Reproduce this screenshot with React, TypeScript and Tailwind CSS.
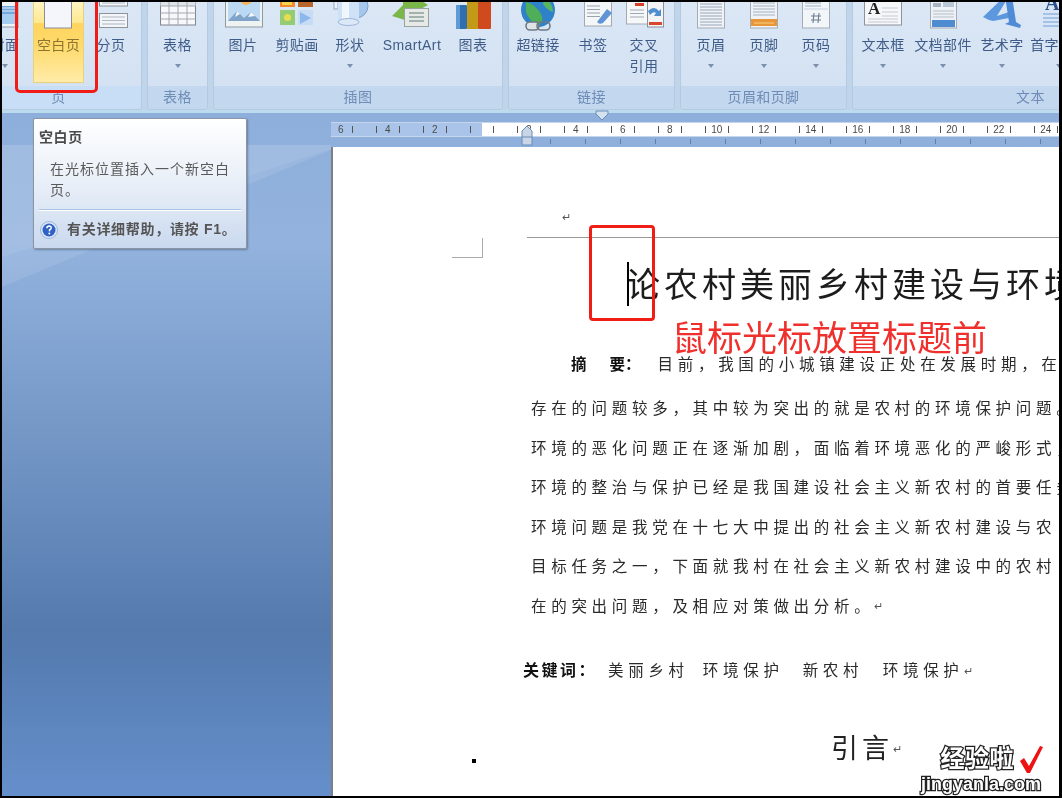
import type { ReactNode } from "react";

const rulerLabels = ["6", "4", "2", "", "2", "4", "6", "8", "10", "12", "14", "16", "18", "20", "22", "24"];

function Svg({ children }: { children: ReactNode }) {
  return (
    <svg width="42" height="34" viewBox="0 0 42 34" className="shrink-0">
      {children}
    </svg>
  );
}

function PageLines({ x, y, w, n, gap = 3, color = "#a9b6c8" }: { x: number; y: number; w: number; n: number; gap?: number; color?: string }) {
  return (
    <>
      {Array.from({ length: n }).map((_, i) => (
        <line key={i} x1={x} x2={x + w} y1={y + i * gap} y2={y + i * gap} stroke={color} strokeWidth="1.2" />
      ))}
    </>
  );
}

const CoverIcon = (
  <Svg>
    <rect x="7" y="-4" width="28" height="29" fill="#eef3f8" stroke="#8f98a3" />
    <rect x="9" y="4" width="24" height="8" fill="#6fa9e0" />
    <PageLines x={9} y={6} w={24} n={2} color="#e9eef4" />
    <rect x="9" y="12" width="24" height="10" fill="#a4cdf0" />
  </Svg>
);
const BlankIcon = (
  <Svg>
    <rect x="6.5" y="-5" width="27" height="31" fill="#f4f6fb" stroke="#8b8f94" />
  </Svg>
);
const BreakIcon = (
  <Svg>
    <rect x="9.5" y="-6" width="28" height="10" fill="#f3f5f8" stroke="#8d949c" />
    <line x1="12" x2="35" y1="1" y2="1" stroke="#aeb7c2" />
    <rect x="9.5" y="11.5" width="28" height="14" fill="#f3f5f8" stroke="#8d949c" />
    <PageLines x={12} y={15} w={23} n={3} gap={3.5} color="#aeb7c2" />
  </Svg>
);
const TableIcon = (
  <Svg>
    <rect x="3.5" y="-5" width="35" height="28" fill="#f7f8fa" stroke="#7f8690" />
    <rect x="3.5" y="-5" width="35" height="9" fill="#dfe3e8" />
    {[12, 21, 30].map((x) => (
      <line key={x} x1={x} x2={x} y1="-5" y2="23" stroke="#a3a9b2" />
    ))}
    {[4, 11, 17].map((y) => (
      <line key={y} x1="3.5" x2="38.5" y1={y} y2={y} stroke="#a3a9b2" />
    ))}
  </Svg>
);
const PictureIcon = (
  <Svg>
    <rect x="3.5" y="-5" width="37" height="30" fill="#eef3f2" stroke="#8e9aa0" />
    <rect x="6" y="-5" width="32" height="24" fill="#bcd9f4" />
    <circle cx="24" cy="-3" r="6" fill="#f7b35a" />
    <path d="M6 19 L15 9 L22 16 L29 10 L38 19 Z" fill="#7fa3c9" />
    <path d="M15 9 L18 12 L13 15 Z" fill="#f2f6fa" />
    <path d="M29 10 L33 14 L26 15 Z" fill="#f2f6fa" />
  </Svg>
);
const ClipArtIcon = (
  <Svg>
    <rect x="4" y="-2" width="15" height="7" fill="#f08a2c" />
    <rect x="6" y="0" width="10" height="3" fill="#f8d24d" />
    <rect x="22" y="-2" width="15" height="7" fill="#b9652c" />
    <rect x="4" y="8" width="15" height="15" fill="#93cc72" />
    <circle cx="11.5" cy="15.5" r="3.5" fill="#e6dd52" />
    <rect x="22" y="8" width="15" height="15" fill="#c6dcf5" />
    <path d="M24 10 L35 16 L24 22 Z" fill="#8db8ec" />
  </Svg>
);
const ShapeIcon = (
  <Svg>
    <circle cx="27" cy="4" r="12" fill="#a7c6ec" stroke="#7f9fc9" />
    <rect x="5" y="-4" width="4" height="11" fill="#eef3f9" stroke="#94a6bf" />
    <rect x="9" y="-4" width="21" height="24" fill="#cfe1f6" />
    <rect x="13" y="-4" width="7" height="24" fill="#f1f6fc" />
    <ellipse cx="19.5" cy="20" rx="10.5" ry="3.5" fill="#dbe8f8" stroke="#9db5d6" />
  </Svg>
);
const SmartArtIcon = (
  <Svg>
    <path d="M1 14 L12 3 L12 -2 L26 -2 L24 -6 L37 3 L28 8 L14 8 L14 18 Z" fill="#7ab648" />
    <rect x="13.5" y="6.5" width="24" height="18" fill="#e6e9e6" stroke="#9aa39b" />
    <PageLines x={18} y={11} w={15} n={3} gap={4} color="#5f7f78" />
  </Svg>
);
const ChartIcon = (
  <Svg>
    <rect x="4" y="3" width="11" height="24" rx="1" fill="#2f6fb0" />
    <rect x="4" y="3" width="4" height="24" fill="#5e9bd6" />
    <rect x="15" y="-4" width="11" height="31" fill="#c39a18" />
    <rect x="26" y="-4" width="13" height="31" rx="1" fill="#cf4a1c" />
  </Svg>
);
const LinkIcon = (
  <Svg>
    <circle cx="21" cy="8" r="17" fill="#2f82c8" />
    <path d="M9 0 Q18 2 24 12 Q28 20 20 24 Q12 18 9 10 Z" fill="#4fae58" />
    <path d="M28 -6 Q36 2 36 10 Q30 8 26 2 Z" fill="#58b660" />
    <rect x="9" y="20" width="13" height="8" rx="4" fill="#dfe4e8" stroke="#6f7a84" strokeWidth="1.6" />
    <rect x="20" y="20" width="13" height="8" rx="4" fill="none" stroke="#6f7a84" strokeWidth="1.6" />
  </Svg>
);
const BookmarkIcon = (
  <Svg>
    <rect x="12.5" y="-6" width="27" height="30" fill="#f4f6f8" stroke="#a2a9b1" />
    <PageLines x={15} y={4} w={13} n={4} gap={3.5} color="#98a3b0" />
    <path d="M25 20 L35 7 L40 11 L31 21 Q27 23 25 20 Z" fill="#5f95d4" />
  </Svg>
);
const CrossRefIcon = (
  <Svg>
    <rect x="3.5" y="-6" width="25" height="28" fill="#f6f7f9" stroke="#a5abb3" />
    <rect x="12" y="1" width="9" height="3" fill="#d9402a" />
    <PageLines x={7} y={8} w={14} n={3} gap={3.5} color="#a0aab6" />
    <rect x="24.5" y="-6" width="16" height="31" fill="#f3f4f6" stroke="#8a9098" />
    <rect x="26" y="20" width="13" height="3" fill="#d9482c" />
    <path d="M25 9 Q31 3 36 9 L38 7 L38 14 L31 14 L33 11 Q30 9 27 13 Z" fill="#4f8fd0" />
  </Svg>
);
const HeaderIcon = (
  <Svg>
    <rect x="7.5" y="-5" width="27" height="31" fill="#eff2f6" stroke="#a5acb5" />
    <PageLines x={10} y={2} w={22} n={8} color="#98a6b8" />
  </Svg>
);
const FooterIcon = (
  <Svg>
    <rect x="7.5" y="-5" width="27" height="31" fill="#eff2f6" stroke="#a5acb5" />
    <PageLines x={10} y={1} w={22} n={5} color="#a6b2c2" />
    <rect x="8" y="17" width="26" height="7" fill="#e8963a" />
    <line x1="11" x2="31" y1="21" y2="21" stroke="#f7d27e" />
  </Svg>
);
const PageNumberIcon = (
  <Svg>
    <rect x="7.5" y="-5" width="27" height="31" fill="#f3f6f9" stroke="#a5acb5" />
    <PageLines x={10} y={1} w={16} n={2} color="#a0b0c4" />
    <line x1="9" x2="33" y1="7" y2="7" stroke="#c4d0de" />
    <g stroke="#6d7d90" strokeWidth="1.1">
      <line x1="19" x2="18" y1="11" y2="21" />
      <line x1="24" x2="23" y1="11" y2="21" />
      <line x1="16" x2="26" y1="14" y2="14" />
      <line x1="16" x2="26" y1="18" y2="18" />
    </g>
  </Svg>
);
const TextBoxIcon = (
  <Svg>
    <rect x="2.5" y="-5" width="37" height="28" fill="#f6f7f9" stroke="#8b929a" />
    <text x="6" y="12" fontFamily="'Liberation Serif', serif" fontWeight="700" fontSize="17" fill="#222">A</text>
    <PageLines x={20} y={6} w={16} n={3} gap={4} color="#c3cad3" />
    <PageLines x={6} y={17} w={30} n={2} gap={3} color="#c3cad3" />
  </Svg>
);
const PartsIcon = (
  <Svg>
    <rect x="8.5" y="-5" width="26" height="31" fill="#eef2f6" stroke="#a3aab3" />
    <rect x="11" y="1" width="8" height="4" fill="#a8b4c4" />
    <rect x="21" y="-2" width="11" height="7" fill="#b9c6d6" />
    <PageLines x={11} y={9} w={21} n={3} color="#b3bdca" />
    <rect x="10" y="18" width="23" height="7" fill="#4f8bd0" />
  </Svg>
);
const WordArtIcon = (
  <Svg>
    <path d="M2 15 L24 -6 L28 -6 L16 14 L28 10 L28 16 L12 19 Q7 18 2 15 Z" fill="#5d97de" />
    <path d="M24 -6 L31 -6 L35 20 L40 23 L39 26 L24 22 L28 20 Z" fill="#4f8bd6" />
  </Svg>
);
const DropCapIcon = (
  <Svg>
    <text x="7" y="8" fontFamily="'Liberation Serif', serif" fontWeight="700" fontSize="20" fill="#2c4f8f">A</text>
    <PageLines x={5} y={12} w={36} n={4} gap={4} color="#6e9bd8" />
  </Svg>
);

function Btn({ w, icon, label, label2, caret, active, className = "" }: { w: number; icon: ReactNode; label: string; label2?: string; caret?: boolean; active?: boolean; className?: string }) {
  return (
    <div
      className={`flex h-[81px] shrink-0 flex-col items-center ${active ? "border-x border-b border-[#e6d27a] bg-[linear-gradient(#fff4c2_0%,#ffe88f_26%,#ffd45e_27%,#ffda6c_55%,#ffeca8_100%)]" : ""} ${className}`}
      style={{ width: w }}
    >
      <div className="flex h-[33px] w-full justify-center overflow-hidden">{icon}</div>
      <div className={`whitespace-nowrap text-[14px] leading-[21px] tracking-[0.4px] ${active ? "text-[#8a7430]" : "text-[#3f5c88]"}`}>{label}</div>
      {label2 && <div className="whitespace-nowrap text-[14px] leading-[21px] tracking-[0.4px] text-[#3f5c88]">{label2}</div>}
      {caret && <div className="mt-[8px] h-0 w-0 border-x-[3.5px] border-t-[4px] border-x-transparent border-t-[#7a90ad]" />}
    </div>
  );
}

function Group({ width, label, children, className = "", labelClass = "bg-[#c3d7ef]" }: { width: number; label: string; children: ReactNode; className?: string; labelClass?: string }) {
  return (
    <div
      className={`flex shrink-0 flex-col overflow-hidden rounded-b-[4px] border-x border-b border-[#b4c9e2] bg-[linear-gradient(#dbe7f5,#d1e0f2)] ${className}`}
      style={{ width }}
    >
      <div className="flex h-[84px]">{children}</div>
      <div className={`flex h-[23px] items-center justify-center text-[14px] tracking-[0.4px] text-[#6e8cb6] ${labelClass}`}>{label}</div>
    </div>
  );
}

function Ribbon() {
  return (
    <div className="flex h-[111px] shrink-0 gap-[5px] border-b-[3px] border-[#bcdcee] bg-[#c0d4ea]">
      <Group width={140} label="页" className="border-l-0" labelClass="bg-[#c8def6] pr-[26px]">
        <Btn w={28} icon={CoverIcon} label="封面" caret className="-ml-[11px]" />
        <Btn w={51} icon={BlankIcon} label="空白页" active className="ml-[14px]" />
        <Btn w={54} icon={BreakIcon} label="分页" />
      </Group>
      <Group width={61} label="表格">
        <Btn w={59} icon={TableIcon} label="表格" caret />
      </Group>
      <Group width={290} label="插图">
        <Btn w={58} icon={PictureIcon} label="图片" />
        <Btn w={50} icon={ClipArtIcon} label="剪贴画" />
        <Btn w={56} icon={ShapeIcon} label="形状" caret />
        <Btn w={68} icon={SmartArtIcon} label="SmartArt" />
        <Btn w={54} icon={ChartIcon} label="图表" />
      </Group>
      <Group width={167} label="链接">
        <Btn w={58} icon={LinkIcon} label="超链接" />
        <Btn w={52} icon={BookmarkIcon} label="书签" />
        <Btn w={50} icon={CrossRefIcon} label="交叉" label2="引用" />
      </Group>
      <Group width={167} label="页眉和页脚">
        <Btn w={60} icon={HeaderIcon} label="页眉" caret />
        <Btn w={46} icon={FooterIcon} label="页脚" caret />
        <Btn w={58} icon={PageNumberIcon} label="页码" caret />
      </Group>
      <Group width={220} label="文本" className="border-r-0" labelClass="bg-[#c3d7ef] pl-[136px]">
        <Btn w={60} icon={TextBoxIcon} label="文本框" caret />
        <Btn w={60} icon={PartsIcon} label="文档部件" caret />
        <Btn w={58} icon={WordArtIcon} label="艺术字" caret />
        <Btn w={56} icon={DropCapIcon} label="首字下沉" caret />
      </Group>
    </div>
  );
}

function Ruler() {
  return (
    <div className="shrink-0 pt-[9px]">
      <div className="relative flex h-[15px] items-center overflow-hidden border-y border-[#c5d6ec] bg-white">
        <div className="absolute inset-y-0 left-0 w-[151px] bg-[#a9c4e8]" />
        <div className="relative flex pl-[4px] text-[#4a4a4a]">
          {rulerLabels.map((label, i) => (
            <div key={i} className="flex">
              <div className="flex w-[11.75px] justify-center text-[10px] leading-[13px]">{label}</div>
              <div className="flex w-[11.75px] items-center justify-center"><div className="h-[7px] w-px bg-[#555]" /></div>
              <div className="w-[11.75px]" />
              <div className="flex w-[11.75px] items-center justify-center"><div className="h-[7px] w-px bg-[#555]" /></div>
            </div>
          ))}
        </div>
      </div>
      <div className="relative flex h-[10px] overflow-visible pl-[219px] pt-[2px]">
        {Array.from({ length: 15 }).map((_, i) => (
          <div key={i} className="h-[5px] w-[35px] shrink-0 border-l border-[#5f7fa8]" />
        ))}
        {/* indent markers */}
        <svg width="18" height="27" viewBox="0 0 18 27" className="absolute -top-[17px] left-[187px]">
          <path d="M4 11 L9 6 L14 11 L14 25 L4 25 Z" fill="#c9d6e6" stroke="#6b8cb8" />
          <line x1="4" x2="14" y1="17" y2="17" stroke="#6b8cb8" />
        </svg>
        <svg width="16" height="12" viewBox="0 0 16 12" className="absolute -top-[27px] left-[263px]">
          <path d="M2 1 L14 1 L14 4 L8 10 L2 4 Z" fill="#d6e1ef" stroke="#6b8cb8" />
        </svg>
      </div>
    </div>
  );
}

function BodyLine({ children, className = "h-[39.5px]", indent = "pl-[198px]" }: { children: ReactNode; className?: string; indent?: string }) {
  return <div className={`flex items-center whitespace-nowrap text-[15.5px] tracking-[4.7px] text-[#2a2a2a] ${indent} ${className}`}>{children}</div>;
}

function ReturnMark() {
  return <span className="shrink-0 text-[11px] tracking-normal text-[#555]">↵</span>;
}

function DocPage() {
  return (
    <div className="relative min-h-0 flex-1 overflow-hidden border-l-2 border-[#7d7f83] bg-white pt-[61px]">
      <div className="h-[16px] pl-[229px] leading-[16px]"><ReturnMark /></div>
      <div className="ml-[194px] mt-[13px] border-t border-[#999]" />
      <div className="absolute left-[119px] top-[91px] h-[20px] w-[31px] border-b border-r border-[#aaa]" />

      <div className="relative mt-[23px] flex h-[48px] items-center whitespace-nowrap pl-[293px] text-[34px] tracking-[4px] text-[#1c1c1c]">
        论农村美丽乡村建设与环境
        <span className="absolute left-[294px] top-[1px] h-[44px] w-[2px] bg-black" />
      </div>

      <BodyLine className="mt-[36px] h-[40px]" indent="pl-[238px]">
        <span className="mr-[23px] shrink-0 font-bold tracking-normal text-[#111]">摘</span>
        <span className="mr-[17px] shrink-0 font-bold tracking-normal text-[#111]">要：</span>
        目前，我国的小城镇建设正处在发展时期，在农
      </BodyLine>
      <BodyLine className="mt-[4px] h-[39.5px]">存在的问题较多，其中较为突出的就是农村的环境保护问题。</BodyLine>
      <BodyLine>环境的恶化问题正在逐渐加剧，面临着环境恶化的严峻形式，</BodyLine>
      <BodyLine>环境的整治与保护已经是我国建设社会主义新农村的首要任务</BodyLine>
      <BodyLine>环境问题是我党在十七大中提出的社会主义新农村建设与农</BodyLine>
      <BodyLine>目标任务之一，下面就我村在社会主义新农村建设中的农村</BodyLine>
      <BodyLine>在的突出问题，及相应对策做出分析。<ReturnMark /></BodyLine>

      <BodyLine className="mt-[25px] h-[40px]" indent="pl-[190px]">
        <span className="mr-[11px] shrink-0 text-[16px] font-bold tracking-[2.5px] text-[#111]">关键词：</span>
        <span className="mr-[14px] shrink-0">美丽乡村</span>
        <span className="mr-[19px] shrink-0">环境保护</span>
        <span className="mr-[19.5px] shrink-0">新农村</span>
        <span className="shrink-0">环境保护</span>
        <ReturnMark />
      </BodyLine>

      <div className="mt-[38px] flex h-[40px] items-center whitespace-nowrap pl-[498px] text-[27px] tracking-[4px] text-[#222]">
        引言<ReturnMark />
      </div>
      <div className="absolute left-[139px] top-[612px] h-[4px] w-[4px] bg-black" />
    </div>
  );
}

function Tooltip() {
  return (
    <div className="absolute left-[31px] top-[5px] h-[131px] w-[214px] rounded-[2px] border border-[#8c96a3] bg-[linear-gradient(#ffffff,#e6edf7_55%,#cad9ef)] px-[5px] pt-[8px] shadow-[1px_1px_2px_rgba(60,80,110,0.5)]">
      <div className="text-[14px] font-bold leading-[20px] tracking-[0.6px] text-[#4a4a4a]">空白页</div>
      <div className="mt-[12px] pl-[11px] text-[14px] leading-[21px] tracking-[1px] text-[#5a5a5a]">在光标位置插入一个新空白页。</div>
      <div className="mt-[8px] border-t border-[#a9c4e4] shadow-[0_1px_0_#fff]" />
      <div className="mt-[9px] flex items-center gap-[9px] pl-[1px]">
        <svg width="18" height="18" viewBox="0 0 18 18" className="shrink-0">
          <circle cx="9" cy="9" r="8.5" fill="#dbe7f8" stroke="#9db6dc" />
          <circle cx="9" cy="9" r="6.5" fill="#2f62c2" />
          <path d="M6.8 7.2 Q7 5 9.2 5 Q11.4 5.2 11.2 7 Q11 8.2 9.6 8.8 L9.4 10.4" fill="none" stroke="#fff" strokeWidth="1.5" />
          <circle cx="9.3" cy="12.4" r="1" fill="#fff" />
        </svg>
        <span className="whitespace-nowrap text-[14px] font-bold tracking-[0.7px] text-[#555]">有关详细帮助，请按 F1。</span>
      </div>
    </div>
  );
}

function Watermark() {
  return (
    <div className="absolute right-[15px] bottom-[2px] flex w-[126px] flex-col items-center">
      <div className="flex items-center self-end">
        <span className="whitespace-nowrap text-[24px] font-bold leading-[30px] tracking-[0.5px] text-white [-webkit-text-stroke:2.5px_#222] [paint-order:stroke_fill]">经验啦</span>
        <svg width="26" height="30" viewBox="0 0 26 30" className="ml-[4px]">
          <path d="M2 17 L6 14 L11 22 L22 2 L25 3 L12 29 L9 29 Z" fill="#ee1111" />
        </svg>
      </div>
      <span className="whitespace-nowrap font-['Liberation_Sans',sans-serif] text-[18px] font-bold leading-[20px] text-white [-webkit-text-stroke:2.5px_#222] [paint-order:stroke_fill]">jingyanla.com</span>
    </div>
  );
}

export default function App() {
  return (
    <div className="h-[798px] w-[1062px] overflow-hidden border-2 border-r-[3px] border-black bg-white">
      <div className="relative flex h-full flex-col overflow-hidden font-['Liberation_Sans','Noto_Sans_CJK_SC',sans-serif] blur-[0.4px]">
        <Ribbon />
        <div className="flex min-h-0 flex-1 bg-[linear-gradient(#8eaedb_0%,#93b3de_19%,#547aae_76%,#658fcb_100%)]">
          <div className="relative w-[329px] shrink-0 overflow-hidden">
            <svg width="329" height="160" viewBox="0 0 329 160" className="absolute left-0 top-[32px]">
              <path d="M0 0 L329 0 L329 5 L0 142 Z" fill="#ffffff" opacity="0.09" />
              <path d="M0 0 L329 0 L329 4 L0 112 Z" fill="#ffffff" opacity="0.07" />
            </svg>
            <Tooltip />
          </div>
          <div className="flex min-w-0 flex-1 flex-col">
            <Ruler />
            <DocPage />
          </div>
        </div>

        {/* red annotation marks */}
        <div className="absolute -top-[10px] left-[13px] h-[101px] w-[83px] rounded-[5px] border-[3px] border-[#f01d16]" />
        <div className="absolute left-[587px] top-[223px] h-[96px] w-[66px] rounded-[4px] border-[3px] border-[#f01d16]" />
        <div className="absolute left-[670px] top-[315px] whitespace-nowrap text-[35px] leading-[44px] text-[#f0302c]">鼠标光标放置标题前</div>
        <Watermark />
      </div>
    </div>
  );
}
